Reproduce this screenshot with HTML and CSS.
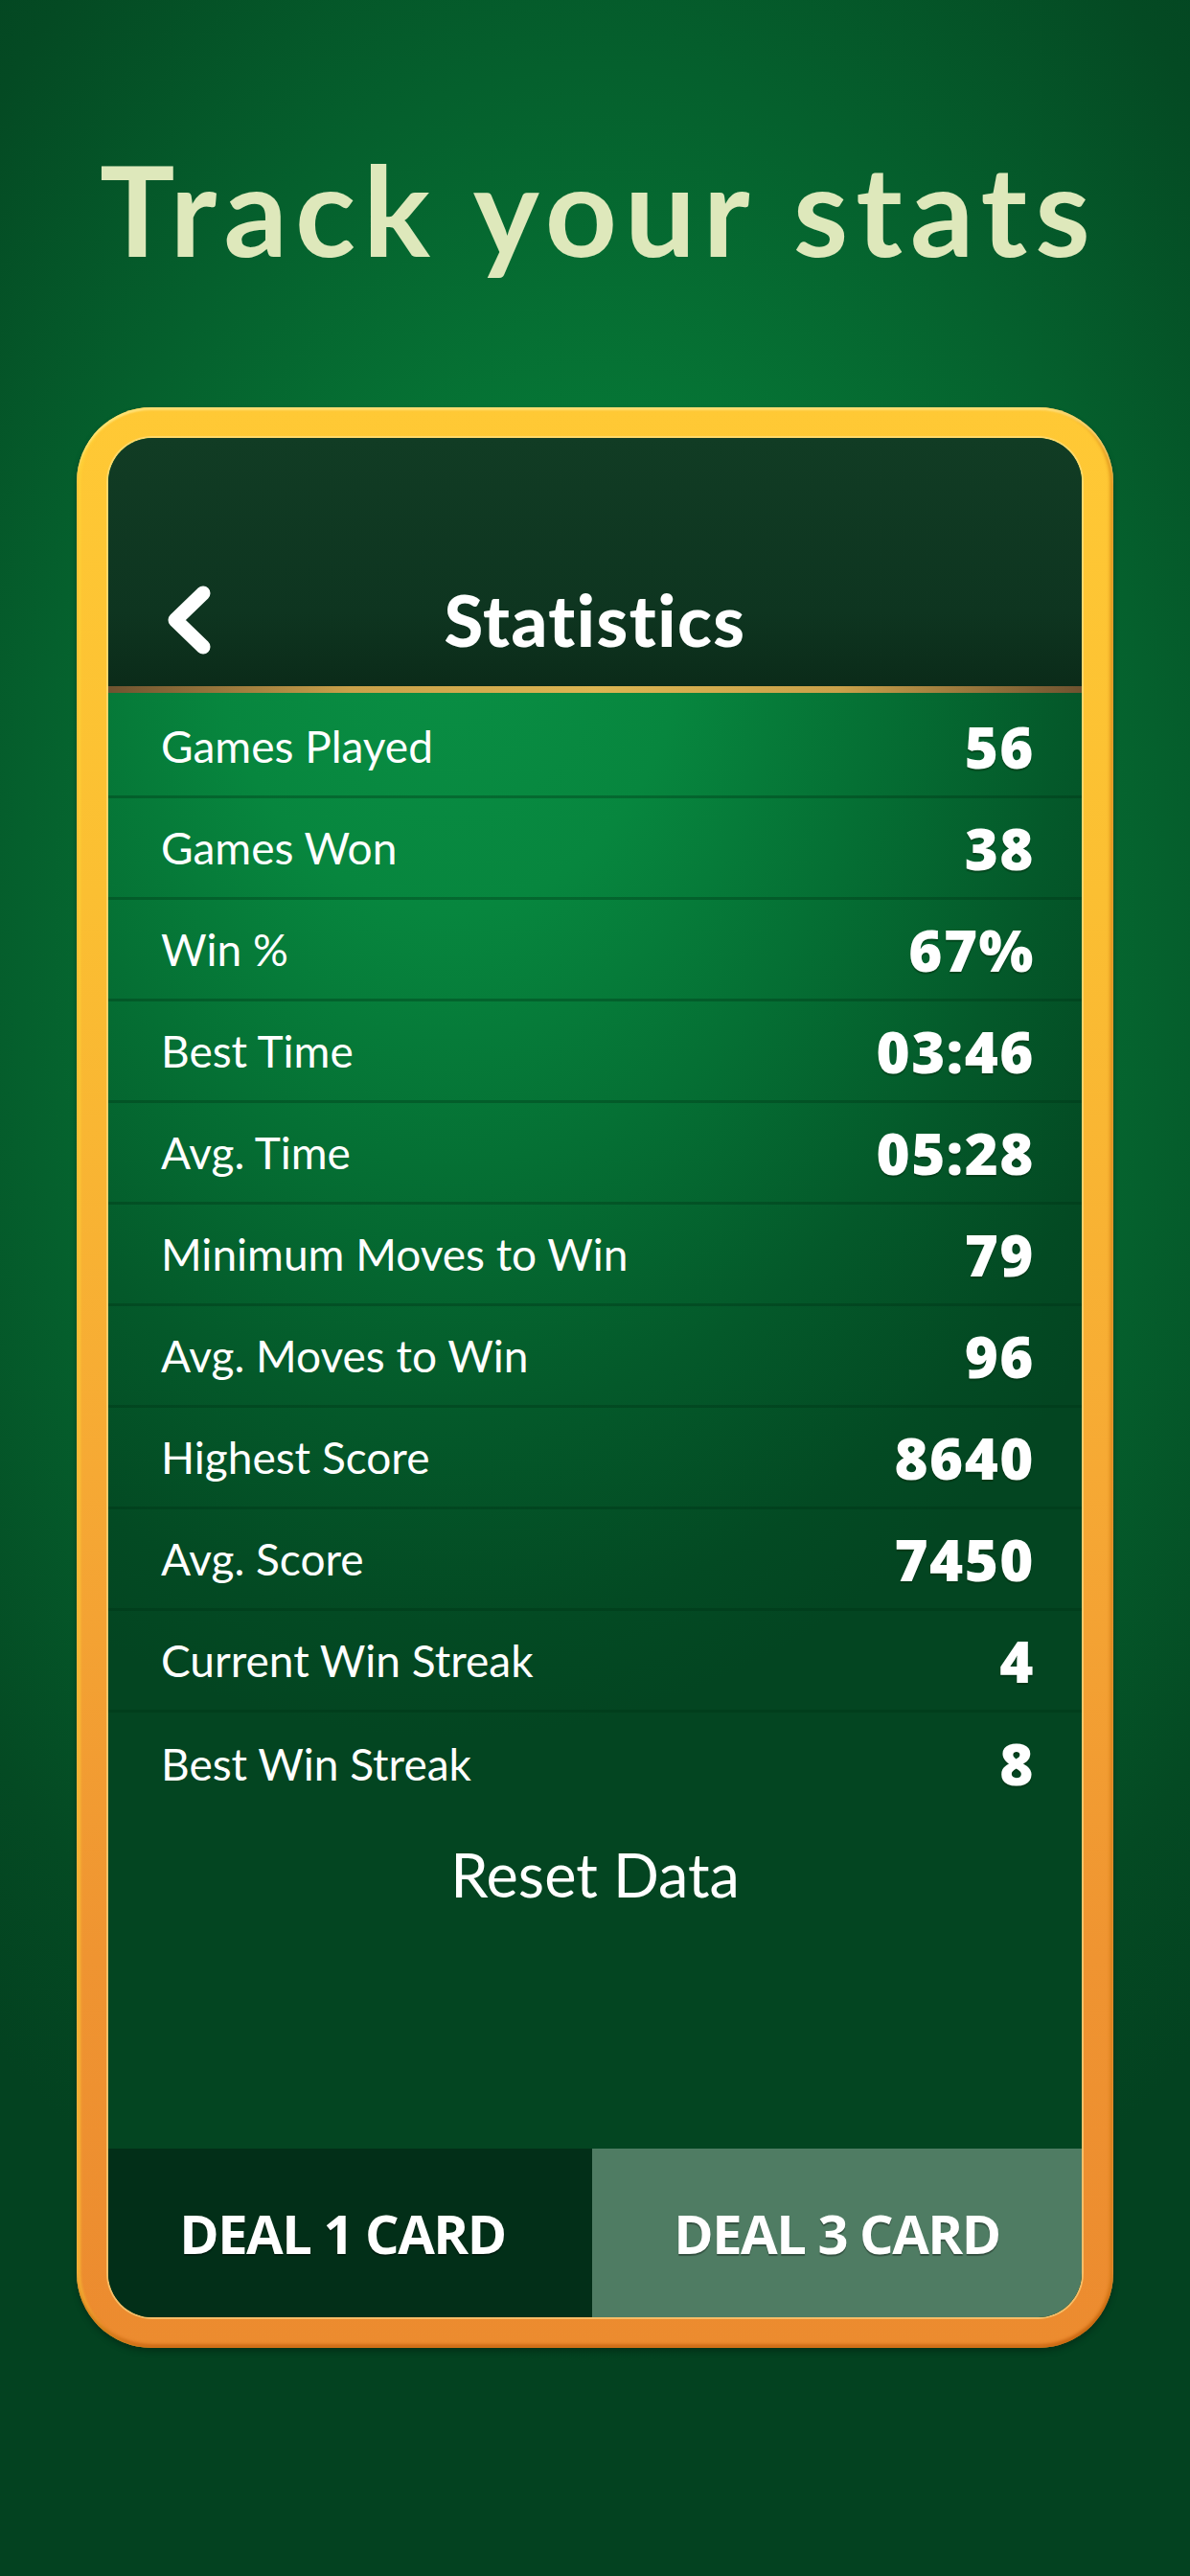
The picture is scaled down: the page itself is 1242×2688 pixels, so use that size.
FILE: index.html
```html
<!DOCTYPE html>
<html lang="en">
<head>
<meta charset="utf-8">
<title>Track your stats</title>
<link rel="stylesheet" href="styles.css">
</head>
<body>
<main class="page">
  <h1 class="headline">Track your stats</h1>
  <section class="frame">
    <div class="panel">
      <header class="panel-head">
        <div class="nav">
          <span class="back" aria-label="Back">
            <svg viewBox="0 0 48 72" width="48" height="72"><path d="M39 8 L10 36 L39 64" fill="none" stroke="#fff" stroke-width="15" stroke-linecap="round" stroke-linejoin="round"/></svg>
          </span>
          <h2 class="nav-title">Statistics</h2>
          <span></span>
        </div>
      </header>
      <ul class="stats">
        <li class="row"><span class="label">Games Played</span><span class="value">56</span></li>
        <li class="row"><span class="label">Games Won</span><span class="value">38</span></li>
        <li class="row"><span class="label">Win %</span><span class="value">67%</span></li>
        <li class="row"><span class="label">Best Time</span><span class="value">03:46</span></li>
        <li class="row"><span class="label">Avg. Time</span><span class="value">05:28</span></li>
        <li class="row"><span class="label">Minimum Moves to Win</span><span class="value">79</span></li>
        <li class="row"><span class="label">Avg. Moves to Win</span><span class="value">96</span></li>
        <li class="row"><span class="label">Highest Score</span><span class="value">8640</span></li>
        <li class="row"><span class="label">Avg. Score</span><span class="value">7450</span></li>
        <li class="row"><span class="label">Current Win Streak</span><span class="value">4</span></li>
        <li class="row"><span class="label">Best Win Streak</span><span class="value">8</span></li>
      </ul>
      <div class="reset">Reset Data</div>
      <div class="tabs">
        <div class="tab tab-active">DEAL 1 CARD</div>
        <div class="tab tab-idle">DEAL 3 CARD</div>
      </div>
    </div>
  </section>
</main>
</body>
</html>
```

FILE: styles.css
```css
* { box-sizing: border-box; }
html, body { margin: 0; padding: 0; }
body {
  width: 1242px;
  height: 2688px;
  overflow: hidden;
  background:
    radial-gradient(ellipse 1000px 1500px at 50% 36%, #0a8b41 0%, #067a37 30%, #05602d 60%, #044a23 85%, #034220 100%);
  font-family: "Lato", "Open Sans", sans-serif;
  color: #fff;
}
.page {
  display: flex;
  flex-direction: column;
  align-items: center;
}
.headline {
  margin: 152px 0 0;
  padding-left: 8px;
  height: 273px;
  font-family: "Lato", sans-serif;
  font-weight: 700;
  font-size: 131px;
  line-height: 1;
  color: #dee8bb;
  letter-spacing: 8px;
}
.frame {
  width: 1082px;
  height: 2025px;
  padding: 32px 33px;
  border-radius: 78px;
  background: linear-gradient(180deg, #ffc935 0%, #fbbf32 25%, #f6a934 55%, #ef9431 80%, #ec8b2f 100%);
  box-shadow:
    inset 0 3px 2px rgba(255, 240, 160, 0.6),
    inset 0 -4px 3px rgba(190, 90, 10, 0.6),
    inset 4px 0 3px rgba(255, 220, 60, 0.5),
    inset -4px 0 3px rgba(200, 110, 10, 0.45),
    0 4px 6px rgba(0, 0, 0, 0.25);
}
.panel {
  height: 100%;
  border-radius: 46px;
  overflow: hidden;
  display: flex;
  flex-direction: column;
  background:
    radial-gradient(ellipse 900px 1200px at 35% 8%, #0a9045 0%, #07863e 28%, #057034 50%, #04592a 72%, #034a23 90%, #034521 100%);
  box-shadow: 0 0 0 2px rgba(255, 230, 150, 0.55);
}
.panel-head {
  height: 266px;
  padding-top: 130px;
  background: linear-gradient(180deg, #113c24 0%, #0e3520 70%, #0b2b19 100%);
  border-bottom: 7px solid transparent;
  border-image: linear-gradient(90deg, #6e5230 0%, #c9a14a 25%, #dcb552 50%, #c9a14a 75%, #6e5230 100%) 1;
}
.nav {
  height: 120px;
  display: grid;
  grid-template-columns: 1fr auto 1fr;
  align-items: center;
}
.back {
  display: flex;
  margin-left: 60px;
  width: 48px;
  height: 72px;
}
.nav-title {
  margin: 0;
  font-family: "Lato", sans-serif;
  font-weight: 900;
  font-size: 74px;
  line-height: 1;
  color: #fff;
  letter-spacing: 1.5px;
}
.stats {
  list-style: none;
  margin: 0;
  padding: 4px 0 0;
}
.row {
  height: 106px;
  padding: 0 49px 0 55px;
  display: flex;
  align-items: center;
  justify-content: space-between;
  border-bottom: 3px solid rgba(0, 50, 20, 0.35);
}
.row:last-child { border-bottom: none; }
.label {
  font-family: "Lato", sans-serif;
  font-weight: 400;
  font-size: 46px;
  color: #fff;
}
.value {
  font-family: "Open Sans", sans-serif;
  font-weight: 800;
  font-size: 60px;
  letter-spacing: 1.5px;
  color: #fff;
  text-shadow: 0 2px 1px rgba(0, 40, 10, 0.45);
}
.reset {
  margin-top: 12px;
  height: 100px;
  display: flex;
  align-items: center;
  justify-content: center;
  font-family: "Lato", sans-serif;
  font-weight: 400;
  font-size: 63px;
  color: #fff;
}
.tabs {
  margin-top: auto;
  height: 176px;
  display: grid;
  grid-template-columns: 505px 1fr;
}
.tab {
  display: flex;
  align-items: center;
  justify-content: center;
  font-family: "Open Sans", sans-serif;
  font-weight: 700;
  font-size: 56px;
  letter-spacing: -1.5px;
  color: #fff;
  text-shadow: 0 2px 1px rgba(0, 0, 0, 0.35);
}
.tab-active { background: #022f18; padding-right: 16px; }
.tab-idle { background: #4f7c63; }
```
